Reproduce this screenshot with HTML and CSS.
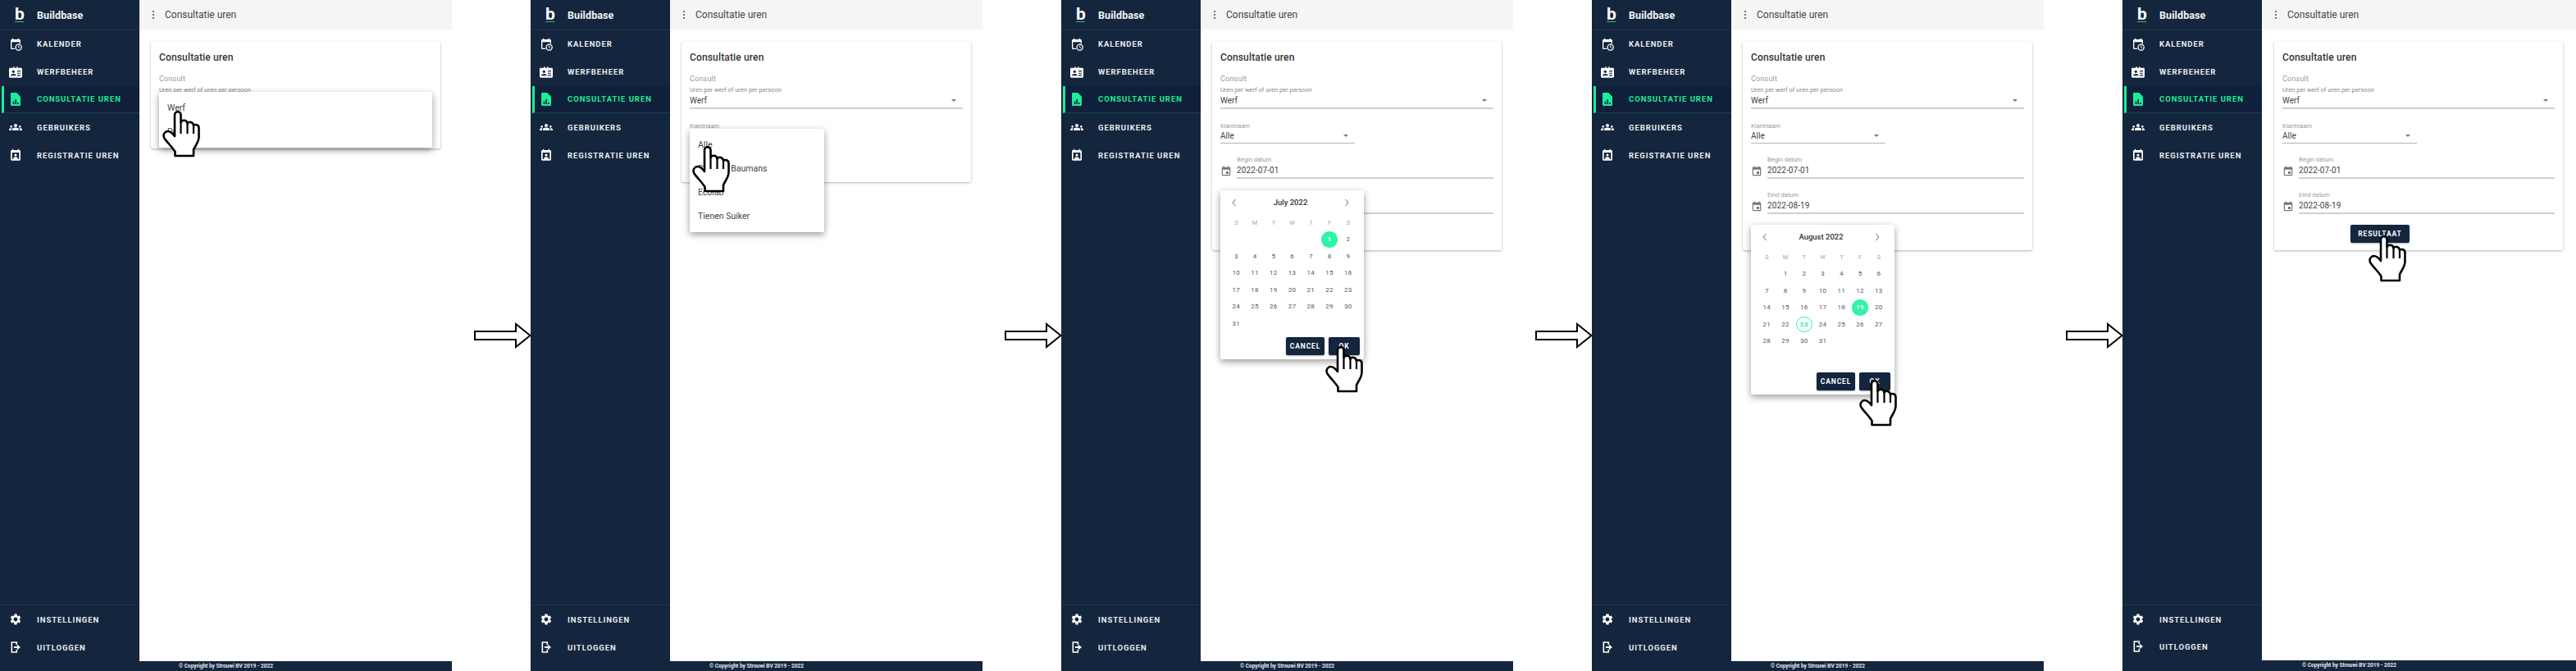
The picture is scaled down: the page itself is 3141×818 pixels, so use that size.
FILE: index.html
```html
<!DOCTYPE html>
<html lang="nl">
<head>
<meta charset="utf-8">
<title>Buildbase - Consultatie uren</title>
<link rel="stylesheet" href="styles.css">
</head>
<body>
<svg class="defs" width="0" height="0" aria-hidden="true">
  <symbol id="i-kal" viewBox="0 0 24 24"><path fill="#fff" d="M16 1v2H8V1H6v2H5C3.9 3 3 3.9 3 5v14c0 1.1.9 2 2 2h6.5a7 7 0 0 1-.9-2H5V8h14v2.6c.7.2 1.4.5 2 .9V5c0-1.1-.9-2-2-2h-1V1z"/><circle cx="17.5" cy="17.5" r="5.3" fill="none" stroke="#fff" stroke-width="2"/><path fill="none" stroke="#fff" stroke-width="1.5" d="M17.5 14.5v3.2l2.2 1.3"/></symbol>
  <symbol id="i-badge" viewBox="0 0 24 20"><path fill="#fff" d="M2 2h6V0h2v2h4V0h2v2h6c1.1 0 2 .9 2 2v14c0 1.1-.9 2-2 2H2c-1.1 0-2-.9-2-2V4c0-1.100.9-2 2-2z"/><circle cx="8" cy="9" r="2.500" fill="#14263d"/><path fill="#14263d" d="M3 16.500c0-2.500 2.500-3.500 5-3.500s5 1 5 3.500zM15 7h6v1.800h-6zM15 11h6v1.800h-6zM15 15h6v1.800h-6z"/></symbol>
  <symbol id="i-doc" viewBox="0 0 18 24"><path fill="#19ee98" d="M2 0h9l7 7v15c0 1.100-.9 2-2 2H2c-1.100 0-2-.9-2-2V2C0 .9.900 0 2 0z"/><path fill="#14263d" d="M4 16h2.500v5H4zM8 12h2.500v9H8zM12 18h2.500v3H12z"/></symbol>
  <symbol id="i-group" viewBox="0 0 24 24"><path fill="#fff" d="M12 12.750c1.630 0 3.070.390 4.240.900 1.080.480 1.760 1.560 1.760 2.730V18H6v-1.610c0-1.180.680-2.260 1.760-2.730 1.170-.520 2.610-.910 4.240-.910zM4 13c1.100 0 2-.9 2-2s-.9-2-2-2-2 .9-2 2 .9 2 2 2zm1.130 1.100c-.370-.060-.740-.100-1.130-.100-.990 0-1.930.210-2.780.580C.480 14.900 0 15.620 0 16.430V18h4.500v-1.610c0-.830.230-1.610.630-2.290zM20 13c1.100 0 2-.9 2-2s-.9-2-2-2-2 .9-2 2 .9 2 2 2zm4 3.430c0-.810-.480-1.530-1.220-1.850-.850-.370-1.790-.580-2.780-.580-.390 0-.760.040-1.130.100.400.680.630 1.460.630 2.290V18H24v-1.570zM12 6c1.660 0 3 1.340 3 3s-1.340 3-3 3-3-1.340-3-3 1.340-3 3-3z"/></symbol>
  <symbol id="i-reg" viewBox="0 0 24 24"><path fill="#fff" d="M16 1v2H8V1H6v2H5C3.900 3 3 3.900 3 5v15c0 1.100.9 2 2 2h14c1.100 0 2-.9 2-2V5c0-1.100-.9-2-2-2h-1V1zM5.500 7.500h13V19.500h-13z" fill-rule="evenodd"/><circle cx="12" cy="12" r="2.400" fill="#fff"/><path fill="#fff" d="M7.500 19.500c0-2.800 2-4 4.500-4s4.500 1.200 4.500 4z"/></symbol>
  <symbol id="i-gear" viewBox="0 0 24 24"><path fill="#fff" d="M19.140 12.940c.040-.3.060-.610.060-.940 0-.320-.020-.640-.070-.940l2.030-1.580c.180-.140.230-.410.120-.610l-1.920-3.320c-.120-.220-.370-.290-.590-.220l-2.390.960c-.5-.380-1.030-.7-1.620-.940l-.360-2.540c-.040-.240-.240-.410-.480-.410h-3.840c-.240 0-.430.170-.470.410l-.360 2.540c-.590.240-1.130.570-1.620.940l-2.390-.960c-.220-.080-.470 0-.590.220L2.740 8.870c-.120.210-.080.470.120.610l2.030 1.580c-.050.3-.090.630-.090.940s.020.640.070.940l-2.030 1.580c-.180.140-.230.410-.12.610l1.920 3.320c.120.220.370.290.590.220l2.390-.960c.5.380 1.030.7 1.620.940l.360 2.540c.050.240.240.410.480.410h3.840c.240 0 .440-.17.470-.41l.360-2.540c.590-.240 1.130-.560 1.620-.940l2.390.960c.220.080.470 0 .590-.220l1.920-3.320c.120-.220.070-.470-.120-.610l-2.010-1.580zM12 15.600c-1.980 0-3.600-1.620-3.600-3.600s1.620-3.600 3.600-3.600 3.600 1.620 3.600 3.600-1.620 3.600-3.600 3.600z"/></symbol>
  <symbol id="i-out" viewBox="0 0 24 24"><path fill="none" stroke="#fff" stroke-width="2.400" d="M14 8V3H5v18h9v-5"/><path fill="#fff" d="M9 10.500h6V7l6 5-6 5v-3.500H9z"/></symbol>
  <symbol id="i-date" viewBox="0 0 24 24"><path fill="#757575" d="M17 12h-5v5h5v-5zM16 1v2H8V1H6v2H5c-1.110 0-1.990.9-1.990 2L3 19c0 1.100.890 2 2 2h14c1.100 0 2-.9 2-2V5c0-1.100-.9-2-2-2h-1V1h-2zm3 18H5V8h14v11z"/></symbol>
  <symbol id="i-hand" viewBox="0 0 46 57"><path fill="#fff" stroke="#000" stroke-width="2.600" stroke-linejoin="round" d="M15 31V5c0-5 7.500-5 7.500 0v9c1.500-3.500 7.500-3 8 1.500 2-3 7-2 7.500 2.500 2-2 6.500-1 6.500 3v11c0 6-4.500 11-6.500 15.500V55H15.500v-5C12 44 6 39 2.500 33.500 .5 30 2 27 4.500 25.500 7.500 24 11 26 15 31z"/><path fill="none" stroke="#000" stroke-width="2.200" d="M22.500 13v15M30.500 15v13M38 18v10"/></symbol>
  <symbol id="i-arrow" viewBox="0 0 70 32"><path fill="#fff" stroke="#000" stroke-width="2" d="M1 11h50V2l17.500 14L51 30v-9H1z"/></symbol>
  <symbol id="i-left" viewBox="0 0 10 14"><path fill="none" stroke="#666" stroke-width="1" d="M6.500 3 3 7l3.500 4"/></symbol>
  <symbol id="i-right" viewBox="0 0 10 14"><path fill="none" stroke="#666" stroke-width="1" d="M3.500 3 7 7l-3.500 4"/></symbol>
</svg>

<div class="stage">

  <!-- Step 1 -->
  <section class="panel">
    <div class="panel-body">
      <aside class="sidebar">
        <div class="brand"><span class="logo">b</span><span class="brand-name">Buildbase</span></div>
        <nav class="nav">
          <a class="item"><svg class="ico"><use href="#i-kal"/></svg>KALENDER</a>
          <a class="item"><svg class="ico"><use href="#i-badge"/></svg>WERFBEHEER</a>
          <a class="item active"><svg class="ico"><use href="#i-doc"/></svg>CONSULTATIE UREN</a>
          <a class="item"><svg class="ico"><use href="#i-group"/></svg>GEBRUIKERS</a>
          <a class="item"><svg class="ico"><use href="#i-reg"/></svg>REGISTRATIE UREN</a>
        </nav>
        <div class="nav-bottom">
          <a class="item"><svg class="ico"><use href="#i-gear"/></svg>INSTELLINGEN</a>
          <a class="item"><svg class="ico"><use href="#i-out"/></svg>UITLOGGEN</a>
        </div>
      </aside>
      <main class="main">
        <header class="topbar"><span class="kebab"></span><span class="top-title">Consultatie uren</span></header>
        <div class="card card-short">
          <h2 class="card-title">Consultatie uren</h2>
          <div class="field-consult">
            <div class="lbl-big">Consult</div>
            <div class="helper">Uren per werf of uren per persoon</div>
            <div class="select"><span>Werf</span><i class="caret"></i></div>
          </div>
        </div>
      </main>
    </div>
    <footer class="footer">© Copyright by Strouwi BV 2019 - 2022</footer>
    <div class="menu menu-consult">
      <div class="opt">Werf</div>
      <div class="opt">Persoon</div>
    </div>
    <svg class="hand hand-1"><use href="#i-hand"/></svg>
  </section>

  <div class="gutter"><svg class="arrow"><use href="#i-arrow"/></svg></div>

  <!-- Step 2 -->
  <section class="panel">
    <div class="panel-body">
      <aside class="sidebar">
        <div class="brand"><span class="logo">b</span><span class="brand-name">Buildbase</span></div>
        <nav class="nav">
          <a class="item"><svg class="ico"><use href="#i-kal"/></svg>KALENDER</a>
          <a class="item"><svg class="ico"><use href="#i-badge"/></svg>WERFBEHEER</a>
          <a class="item active"><svg class="ico"><use href="#i-doc"/></svg>CONSULTATIE UREN</a>
          <a class="item"><svg class="ico"><use href="#i-group"/></svg>GEBRUIKERS</a>
          <a class="item"><svg class="ico"><use href="#i-reg"/></svg>REGISTRATIE UREN</a>
        </nav>
        <div class="nav-bottom">
          <a class="item"><svg class="ico"><use href="#i-gear"/></svg>INSTELLINGEN</a>
          <a class="item"><svg class="ico"><use href="#i-out"/></svg>UITLOGGEN</a>
        </div>
      </aside>
      <main class="main">
        <header class="topbar"><span class="kebab"></span><span class="top-title">Consultatie uren</span></header>
        <div class="card card-mid">
          <h2 class="card-title">Consultatie uren</h2>
          <div class="field-consult">
            <div class="lbl-big">Consult</div>
            <div class="helper">Uren per werf of uren per persoon</div>
            <div class="select"><span>Werf</span><i class="caret"></i></div>
          </div>
          <div class="field-klant">
            <div class="lbl">Klantnaam</div>
            <div class="select select-thin"><span>Alle</span><i class="caret"></i></div>
          </div>
        </div>
      </main>
    </div>
    <footer class="footer">© Copyright by Strouwi BV 2019 - 2022</footer>
    <div class="menu menu-klant">
      <div class="opt">Alle</div>
      <div class="opt">Bouwen Baumans</div>
      <div class="opt">Ecolab</div>
      <div class="opt">Tienen Suiker</div>
    </div>
    <svg class="hand hand-2"><use href="#i-hand"/></svg>
  </section>

  <div class="gutter"><svg class="arrow"><use href="#i-arrow"/></svg></div>

  <!-- Step 3 -->
  <section class="panel">
    <div class="panel-body">
      <aside class="sidebar">
        <div class="brand"><span class="logo">b</span><span class="brand-name">Buildbase</span></div>
        <nav class="nav">
          <a class="item"><svg class="ico"><use href="#i-kal"/></svg>KALENDER</a>
          <a class="item"><svg class="ico"><use href="#i-badge"/></svg>WERFBEHEER</a>
          <a class="item active"><svg class="ico"><use href="#i-doc"/></svg>CONSULTATIE UREN</a>
          <a class="item"><svg class="ico"><use href="#i-group"/></svg>GEBRUIKERS</a>
          <a class="item"><svg class="ico"><use href="#i-reg"/></svg>REGISTRATIE UREN</a>
        </nav>
        <div class="nav-bottom">
          <a class="item"><svg class="ico"><use href="#i-gear"/></svg>INSTELLINGEN</a>
          <a class="item"><svg class="ico"><use href="#i-out"/></svg>UITLOGGEN</a>
        </div>
      </aside>
      <main class="main">
        <header class="topbar"><span class="kebab"></span><span class="top-title">Consultatie uren</span></header>
        <div class="card">
          <h2 class="card-title">Consultatie uren</h2>
          <div class="field-consult">
            <div class="lbl-big">Consult</div>
            <div class="helper">Uren per werf of uren per persoon</div>
            <div class="select"><span>Werf</span><i class="caret"></i></div>
          </div>
          <div class="field-klant">
            <div class="lbl">Klantnaam</div>
            <div class="select select-thin"><span>Alle</span><i class="caret"></i></div>
          </div>
          <div class="field-date">
            <svg class="date-ico"><use href="#i-date"/></svg>
            <div class="date-box"><div class="lbl">Begin datum</div><div class="date-val">2022-07-01</div></div>
          </div>
          <div class="field-date">
            <svg class="date-ico"><use href="#i-date"/></svg>
            <div class="date-box"><div class="lbl">Eind datum</div><div class="date-val">2022-08-19</div></div>
          </div>
          <div class="actions"><button class="btn btn-result">RESULTAAT</button></div>
        </div>
      </main>
    </div>
    <footer class="footer">© Copyright by Strouwi BV 2019 - 2022</footer>
    <div class="calendar cal-begin">
      <div class="cal-head"><svg class="chev"><use href="#i-left"/></svg><span>July 2022</span><svg class="chev"><use href="#i-right"/></svg></div>
      <div class="cal-grid">
        <span class="dow">S</span><span class="dow">M</span><span class="dow">T</span><span class="dow">W</span><span class="dow">T</span><span class="dow">F</span><span class="dow">S</span>
        <span></span><span></span><span></span><span></span><span></span><span class="day on">1</span><span class="day">2</span>
        <span class="day">3</span><span class="day">4</span><span class="day">5</span><span class="day">6</span><span class="day">7</span><span class="day">8</span><span class="day">9</span>
        <span class="day">10</span><span class="day">11</span><span class="day">12</span><span class="day">13</span><span class="day">14</span><span class="day">15</span><span class="day">16</span>
        <span class="day">17</span><span class="day">18</span><span class="day">19</span><span class="day">20</span><span class="day">21</span><span class="day">22</span><span class="day">23</span>
        <span class="day">24</span><span class="day">25</span><span class="day">26</span><span class="day">27</span><span class="day">28</span><span class="day">29</span><span class="day">30</span>
        <span class="day">31</span>
      </div>
      <div class="cal-actions"><button class="btn btn-cancel">CANCEL</button><button class="btn btn-ok">OK</button></div>
    </div>
    <svg class="hand hand-3"><use href="#i-hand"/></svg>
  </section>

  <div class="gutter"><svg class="arrow"><use href="#i-arrow"/></svg></div>

  <!-- Step 4 -->
  <section class="panel">
    <div class="panel-body">
      <aside class="sidebar">
        <div class="brand"><span class="logo">b</span><span class="brand-name">Buildbase</span></div>
        <nav class="nav">
          <a class="item"><svg class="ico"><use href="#i-kal"/></svg>KALENDER</a>
          <a class="item"><svg class="ico"><use href="#i-badge"/></svg>WERFBEHEER</a>
          <a class="item active"><svg class="ico"><use href="#i-doc"/></svg>CONSULTATIE UREN</a>
          <a class="item"><svg class="ico"><use href="#i-group"/></svg>GEBRUIKERS</a>
          <a class="item"><svg class="ico"><use href="#i-reg"/></svg>REGISTRATIE UREN</a>
        </nav>
        <div class="nav-bottom">
          <a class="item"><svg class="ico"><use href="#i-gear"/></svg>INSTELLINGEN</a>
          <a class="item"><svg class="ico"><use href="#i-out"/></svg>UITLOGGEN</a>
        </div>
      </aside>
      <main class="main">
        <header class="topbar"><span class="kebab"></span><span class="top-title">Consultatie uren</span></header>
        <div class="card">
          <h2 class="card-title">Consultatie uren</h2>
          <div class="field-consult">
            <div class="lbl-big">Consult</div>
            <div class="helper">Uren per werf of uren per persoon</div>
            <div class="select"><span>Werf</span><i class="caret"></i></div>
          </div>
          <div class="field-klant">
            <div class="lbl">Klantnaam</div>
            <div class="select select-thin"><span>Alle</span><i class="caret"></i></div>
          </div>
          <div class="field-date">
            <svg class="date-ico"><use href="#i-date"/></svg>
            <div class="date-box"><div class="lbl">Begin datum</div><div class="date-val">2022-07-01</div></div>
          </div>
          <div class="field-date">
            <svg class="date-ico"><use href="#i-date"/></svg>
            <div class="date-box"><div class="lbl">Eind datum</div><div class="date-val">2022-08-19</div></div>
          </div>
          <div class="actions"><button class="btn btn-result">RESULTAAT</button></div>
        </div>
      </main>
    </div>
    <footer class="footer">© Copyright by Strouwi BV 2019 - 2022</footer>
    <div class="calendar cal-end">
      <div class="cal-head"><svg class="chev"><use href="#i-left"/></svg><span>August 2022</span><svg class="chev"><use href="#i-right"/></svg></div>
      <div class="cal-grid">
        <span class="dow">S</span><span class="dow">M</span><span class="dow">T</span><span class="dow">W</span><span class="dow">T</span><span class="dow">F</span><span class="dow">S</span>
        <span></span><span class="day">1</span><span class="day">2</span><span class="day">3</span><span class="day">4</span><span class="day">5</span><span class="day">6</span>
        <span class="day">7</span><span class="day">8</span><span class="day">9</span><span class="day">10</span><span class="day">11</span><span class="day">12</span><span class="day">13</span>
        <span class="day">14</span><span class="day">15</span><span class="day">16</span><span class="day">17</span><span class="day">18</span><span class="day on">19</span><span class="day">20</span>
        <span class="day">21</span><span class="day">22</span><span class="day today">23</span><span class="day">24</span><span class="day">25</span><span class="day">26</span><span class="day">27</span>
        <span class="day">28</span><span class="day">29</span><span class="day">30</span><span class="day">31</span>
      </div>
      <div class="cal-actions"><button class="btn btn-cancel">CANCEL</button><button class="btn btn-ok">OK</button></div>
    </div>
    <svg class="hand hand-4"><use href="#i-hand"/></svg>
  </section>

  <div class="gutter"><svg class="arrow"><use href="#i-arrow"/></svg></div>

  <!-- Step 5 -->
  <section class="panel panel-last">
    <div class="panel-body">
      <aside class="sidebar">
        <div class="brand"><span class="logo">b</span><span class="brand-name">Buildbase</span></div>
        <nav class="nav">
          <a class="item"><svg class="ico"><use href="#i-kal"/></svg>KALENDER</a>
          <a class="item"><svg class="ico"><use href="#i-badge"/></svg>WERFBEHEER</a>
          <a class="item active"><svg class="ico"><use href="#i-doc"/></svg>CONSULTATIE UREN</a>
          <a class="item"><svg class="ico"><use href="#i-group"/></svg>GEBRUIKERS</a>
          <a class="item"><svg class="ico"><use href="#i-reg"/></svg>REGISTRATIE UREN</a>
        </nav>
        <div class="nav-bottom">
          <a class="item"><svg class="ico"><use href="#i-gear"/></svg>INSTELLINGEN</a>
          <a class="item"><svg class="ico"><use href="#i-out"/></svg>UITLOGGEN</a>
        </div>
      </aside>
      <main class="main">
        <header class="topbar"><span class="kebab"></span><span class="top-title">Consultatie uren</span></header>
        <div class="card">
          <h2 class="card-title">Consultatie uren</h2>
          <div class="field-consult">
            <div class="lbl-big">Consult</div>
            <div class="helper">Uren per werf of uren per persoon</div>
            <div class="select"><span>Werf</span><i class="caret"></i></div>
          </div>
          <div class="field-klant">
            <div class="lbl">Klantnaam</div>
            <div class="select select-thin"><span>Alle</span><i class="caret"></i></div>
          </div>
          <div class="field-date">
            <svg class="date-ico"><use href="#i-date"/></svg>
            <div class="date-box"><div class="lbl">Begin datum</div><div class="date-val">2022-07-01</div></div>
          </div>
          <div class="field-date">
            <svg class="date-ico"><use href="#i-date"/></svg>
            <div class="date-box"><div class="lbl">Eind datum</div><div class="date-val">2022-08-19</div></div>
          </div>
          <div class="actions"><button class="btn btn-result">RESULTAAT</button></div>
        </div>
      </main>
    </div>
    <footer class="footer">© Copyright by Strouwi BV 2019 - 2022</footer>
    <svg class="hand hand-5"><use href="#i-hand"/></svg>
  </section>

</div>
</body>
</html>
```

FILE: styles.css
```css
* { box-sizing: border-box; }
html, body { margin: 0; padding: 0; background: #fff; }
body { font-family: Roboto, "Liberation Sans", sans-serif; overflow: hidden; }
.defs { position: absolute; }

.stage { display: flex; width: 3141px; height: 818px; }
.gutter { width: 96px; display: flex; align-items: center; justify-content: flex-end; }
.arrow { width: 70px; height: 32px; flex: none; margin-right: -1px; position: relative; z-index: 2; }

.panel { position: relative; width: 551px; height: 818px; display: flex; flex-direction: column; background: #14263d; }
.panel-last { width: 553px; }
.panel-body { flex: 1; display: flex; min-height: 0; }
.footer { height: 12px; line-height: 12px; text-align: center; color: #e6e9ed; font-size: 6.500px; font-weight: 700; }
.panel-last .footer { height: 13px; }

/* sidebar */
.sidebar { width: 170px; flex: none; display: flex; flex-direction: column; background: #14263d; }
.brand { height: 37px; flex: none; display: flex; align-items: center; border-bottom: 1px solid #22324a; padding-left: 18px; }
.logo { width: 27px; font-size: 21px; font-weight: 700; color: #fff; line-height: 16px; height: 19px; position: relative; }
.logo::after { content: ""; position: absolute; left: 0; top: 17.500px; width: 11px; height: 1px; background: #2fc27f; }
.brand-name { color: #f2f4f6; font-size: 12.500px; font-weight: 700; letter-spacing: .1px; }
.nav { flex: 1; }
.item { height: 33.800px; display: flex; align-items: center; padding-left: 11px; color: #e9edf1; font-size: 9.500px; font-weight: 700; letter-spacing: .95px; white-space: nowrap; }
.ico { width: 16px; height: 16px; flex: none; margin-right: 18px; }
.active { margin-left: 2px; padding-left: 6px; border-left: 3px solid #19ee98; color: #19ee98; background: #10203a; border-bottom: 1px solid #12474c; }
.nav-bottom { border-top: 1px solid #22324a; flex: none; }
.panel-last .nav-bottom .item { height: 33.300px; }

/* main */
.main { flex: 1; min-width: 0; background: #fff; }
.topbar { height: 36px; background: #f5f5f5; display: flex; align-items: center; padding-left: 16px; }
.kebab { width: 2px; height: 2px; background: #444; border-radius: 50%; box-shadow: 0 -4px 0 #444, 0 4px 0 #444; margin-right: 13px; }
.top-title { font-size: 12px; color: #444; }

/* card */
.card { margin: 15px 14px 0; padding: 9px 10px 0; background: #fff; box-shadow: 0 1px 3px rgba(0,0,0,.3); border-radius: 2px; }
.panel-last .card { margin-left: 15px; margin-right: 16px; }
.card-short { padding-bottom: 48px; }
.card-mid { padding-bottom: 46.500px; }
.card-title { margin: 0; height: 20px; line-height: 20px; font-size: 12px; font-weight: 500; color: #333; letter-spacing: .15px; }
.lbl-big { font-size: 9px; line-height: 12px; color: #9a9a9a; margin-top: 10px; letter-spacing: .2px; }
.helper { font-size: 7.500px; line-height: 10px; color: #8a8a8a; margin-top: 3px; }
.lbl { font-size: 7.500px; line-height: 10px; color: #9a9a9a; }
.select { display: flex; justify-content: space-between; align-items: center; height: 17px; margin-top: 1px; padding: 0 8px 3px 0; border-bottom: 2px solid #cfcfcf; font-size: 10px; color: #444; }
.select-thin { border-bottom-width: 1px; border-bottom-color: #b5b5b5; height: 16px; margin-top: 0; }
.field-klant { width: 164px; margin-top: 16px; }
.caret { width: 0; height: 0; border-left: 3px solid transparent; border-right: 3px solid transparent; border-top: 3px solid #777; }
.field-date { display: flex; align-items: flex-end; margin-top: 15px; }
.date-ico { width: 14px; height: 14px; flex: none; margin: 0 6px 2px 0; }
.date-box { flex: 1; border-bottom: 2px solid #cfcfcf; padding-bottom: 2px; }
.date-val { font-size: 10px; line-height: 13px; color: #444; letter-spacing: .1px; margin-top: 1px; }

.actions { display: flex; margin-top: 13px; padding: 0 0 9px 83px; }
.btn { border: 0; border-radius: 2px; padding: 0; background: #14263d; color: #fff; font-family: inherit; font-size: 8.500px; font-weight: 700; letter-spacing: .85px; height: 22px; box-shadow: 0 1px 2px rgba(0,0,0,.3); }
.btn-result { width: 72px; }
.btn-cancel { width: 47px; }
.btn-ok { width: 38px; }

/* overlays */
.menu { position: absolute; left: 194px; padding: 5px 0; background: #fff; border-radius: 2px; box-shadow: 0 3px 8px rgba(0,0,0,.4); z-index: 3; }
.menu-consult { top: 112px; width: 333px; }
.menu-klant { top: 157px; width: 164px; }
.opt { height: 29px; line-height: 29px; padding-left: 10px; font-size: 10.500px; color: #444; }

.calendar { position: absolute; left: 194px; width: 175px; height: 206px; background: #fff; border-radius: 2px; box-shadow: 0 3px 8px rgba(0,0,0,.4); z-index: 3; display: flex; flex-direction: column; padding: 0 5px 5px 8px; }
.cal-begin { top: 232px; }
.cal-end { top: 274px; height: 207px; }
.cal-head { height: 29px; display: flex; align-items: center; justify-content: space-between; padding: 0 11px 0 4px; font-size: 9.500px; font-weight: 500; color: #333; flex: none; }
.chev { width: 10px; height: 14px; }
.cal-grid { display: grid; grid-template-columns: repeat(7, 22.750px); grid-template-rows: repeat(7, 20.500px); align-items: center; justify-items: center; flex: none; }
.dow { font-size: 7.500px; color: #a8a8a8; }
.day { width: 19.500px; height: 19.500px; line-height: 19.500px; border-radius: 50%; text-align: center; font-size: 8px; color: #555; letter-spacing: .5px; }
.day.on { background: #2ef5a5; color: #fff; font-weight: 700; }
.day.today { border: 1px solid #2ef5a5; line-height: 17.500px; color: #19ee98; font-weight: 700; }
.cal-actions { margin-top: auto; display: flex; justify-content: flex-end; gap: 5px; }

.hand { position: absolute; width: 46px; height: 57px; z-index: 5; }
.hand-1 { left: 198px; top: 135px; }
.hand-2 { left: 197px; top: 178px; }
.hand-3 { left: 322px; top: 422px; }
.hand-4 { left: 326px; top: 463px; }
.hand-5 { left: 300px; top: 287px; }
```
